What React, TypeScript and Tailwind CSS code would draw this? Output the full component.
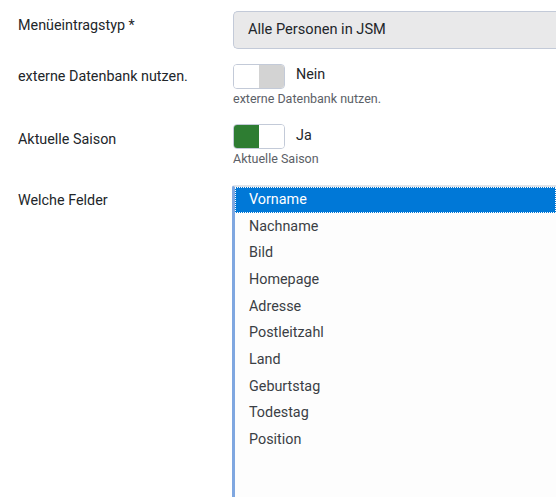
import React from "react";

const items = ["Vorname","Nachname","Bild","Homepage","Adresse","Postleitzahl","Land","Geburtstag","Todestag","Position"];

function Toggle({ on }: { on: boolean }) {
  return (
    <div className="flex h-[25px] w-[52px] overflow-hidden rounded-[4px] border border-[#c3cad8] bg-white">
      {on ? (
        <>
          <div className="h-full w-1/2 bg-[#2e7d32]" />
          <div className="h-full w-1/2 bg-white" />
        </>
      ) : (
        <>
          <div className="h-full w-1/2 bg-white" />
          <div className="h-full w-1/2 bg-[#d3d3d3]" />
        </>
      )}
    </div>
  );
}

export default function App() {
  return (
    <div className="h-[497px] w-[556px] overflow-hidden bg-white font-['Roboto',sans-serif] text-[14.35px] text-[#22262a]">
      <div className="flex pt-[11px]">
        <div className="w-[233px] pl-[18px] pt-[5px] leading-[20px]">Menüeintragstyp *</div>
        <div className="flex h-[38px] flex-1 items-center rounded-l-[5px] border border-r-0 border-[#c3cad8] bg-[#e9e9ea] pl-[14px] text-[14.6px] text-[#22262a]">
          Alle Personen in JSM
        </div>
      </div>

      <div className="mt-[15px] flex">
        <div className="w-[233px] pl-[18px] pt-[3px] leading-[20px]">externe Datenbank nutzen.</div>
        <div>
          <div className="flex items-center">
            <Toggle on={false} />
            <span className="ml-[11px] -mt-[3px] text-[14.35px]">Nein</span>
          </div>
          <div className="mt-[2px] text-[12.5px] leading-[16px] text-[#5b6066]">externe Datenbank nutzen.</div>
        </div>
      </div>

      <div className="mt-[17px] flex">
        <div className="w-[233px] pl-[18px] pt-[6px] leading-[20px]">Aktuelle Saison</div>
        <div>
          <div className="flex items-center">
            <Toggle on={true} />
            <span className="ml-[11px] -mt-[1px] text-[14.35px]">Ja</span>
          </div>
          <div className="mt-[2px] text-[12.5px] leading-[16px] text-[#5b6066]">Aktuelle Saison</div>
        </div>
      </div>

      <div className="mt-[18px] flex">
        <div className="w-[232px] pl-[18px] pt-[6px] leading-[20px]">Welche Felder</div>
        <div className="h-[320px] flex-1 rounded-tl-[3px] border-l-[3px] border-t-2 border-l-[#7fa7e0] border-t-[#e2e4e8] bg-[#fdfdfd]">
          <div className="flex h-[26px] items-center border border-dotted border-white bg-[#0078d7] pl-[13px] text-[14.35px] text-white">
            Vorname
          </div>
          {items.slice(1).map((it) => (
            <div key={it} className="flex h-[26.667px] items-center pl-[14px] text-[14.35px] text-[#3b3f45]">
              {it}
            </div>
          ))}
        </div>
      </div>
    </div>
  );
}
